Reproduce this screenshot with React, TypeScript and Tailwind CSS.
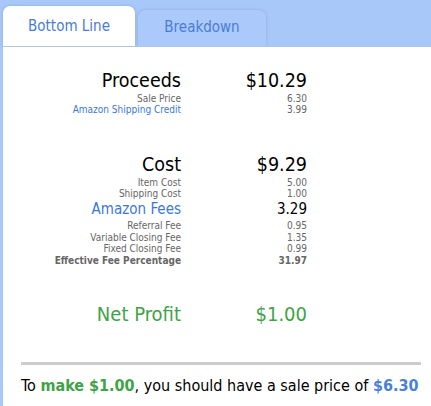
function Row({ label, value, className = "" }: { label: string; value: string; className?: string }) {
  return (
    <>
      <div className={`text-right ${className}`}>{label}</div>
      <div className={`text-right ${className}`}>{value}</div>
    </>
  );
}

export default function App() {
  return (
    <div className="w-[431px] h-[406px] bg-[#a8c8f9] overflow-hidden flex flex-col font-['DejaVu_Sans_Condensed','DejaVu_Sans',sans-serif]">
      {/* tabs */}
      <div className="flex items-end gap-[3px] pl-[3px] h-[46px]">
        <div className="w-[132px] h-[40px] bg-white rounded-t-[7px] flex items-center justify-center text-[15px] text-[#4a7cd4] shadow-[0_0_3px_rgba(80,110,170,0.35)]">
          Bottom Line
        </div>
        <div className="w-[128px] h-[36px] bg-[#abcafb] rounded-t-[7px] flex items-center justify-center text-[15px] text-[#4a7cd4] pb-[2px] shadow-[0_0_3px_rgba(80,110,170,0.35)]">
          Breakdown
        </div>
      </div>

      {/* panel */}
      <div className="flex-1 ml-[3px] bg-white pl-[18px] pr-[10px] pt-[21px] border-t border-[#b4c4dc]">
        <div className="grid grid-cols-[160px_126px] text-[#666]">
          <Row label="Proceeds" value="$10.29" className="text-[19.5px] leading-[25px] text-black" />
          <Row label="Sale Price" value="6.30" className="text-[10px] leading-[11px]" />
          <div className="text-right text-[10px] leading-[11px] text-[#3c78d8]">Amazon Shipping Credit</div>
          <div className="text-right text-[10px] leading-[11px]">3.99</div>

          <div className="h-[37px] col-span-2" />
          <Row label="Cost" value="$9.29" className="text-[19.5px] leading-[25px] text-black" />
          <Row label="Item Cost" value="5.00" className="text-[10px] leading-[11px]" />
          <Row label="Shipping Cost" value="1.00" className="text-[10px] leading-[11px]" />
          <div className="text-right text-[15px] leading-[21px] text-[#3c78d8]">Amazon Fees</div>
          <div className="text-right text-[15px] leading-[21px] text-black">3.29</div>
          <Row label="Referral Fee" value="0.95" className="text-[10px] leading-[11.5px]" />
          <Row label="Variable Closing Fee" value="1.35" className="text-[10px] leading-[11.5px]" />
          <Row label="Fixed Closing Fee" value="0.99" className="text-[10px] leading-[11.5px]" />
          <Row label="Effective Fee Percentage" value="31.97" className="text-[10px] leading-[12px] font-bold" />

          <div className="h-[35px] col-span-2" />
          <Row label="Net Profit" value="$1.00" className="text-[20px] leading-[24px] text-[#3fa347]" />
        </div>

        <div className="mt-[36px] h-[3px] bg-[#cccccc] w-[400px]" />
        <div className="mt-[11px] text-[16px] leading-[20px] text-black whitespace-nowrap">
          To <span className="font-bold text-[#3fa347]">make $1.00</span>, you should have a sale price of{" "}
          <span className="font-bold text-[#4a7fdc]">$6.30</span>
        </div>
      </div>
    </div>
  );
}
